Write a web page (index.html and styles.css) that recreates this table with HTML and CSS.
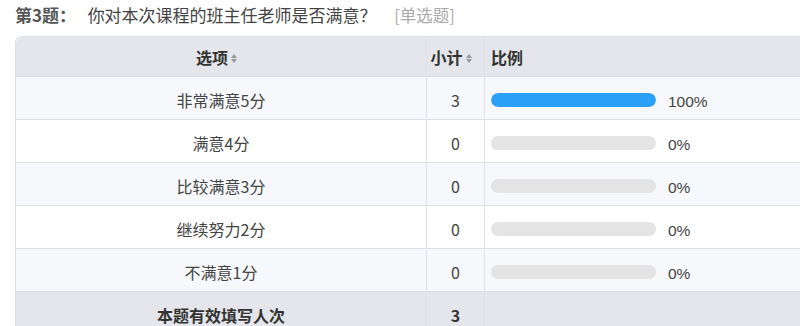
FILE: index.html
```html
<!DOCTYPE html>
<html lang="zh-CN">
<head>
<meta charset="utf-8">
<link rel="stylesheet" href="styles.css">
</head>
<body>
<div class="page">
  <div class="qtitle">
    <span class="qnum">第3题：</span>
    <span class="qtext">你对本次课程的班主任老师是否满意？</span>
    <span class="qtype">[单选题]</span>
  </div>
  <table class="stat">
    <colgroup>
      <col class="c-opt">
      <col class="c-cnt">
      <col class="c-pct">
    </colgroup>
    <thead>
      <tr>
        <th class="center">选项<span class="sort"><i class="up"></i><i class="down"></i></span></th>
        <th class="center">小计<span class="sort"><i class="up"></i><i class="down"></i></span></th>
        <th class="left">比例</th>
      </tr>
    </thead>
    <tbody>
      <tr class="odd">
        <td class="center">非常满意5分</td>
        <td class="center">3</td>
        <td><div class="pct"><div class="bar"><div class="fill" style="width:100%"></div></div><span class="pv">100%</span></div></td>
      </tr>
      <tr>
        <td class="center">满意4分</td>
        <td class="center">0</td>
        <td><div class="pct"><div class="bar"><div class="fill" style="width:0%"></div></div><span class="pv">0%</span></div></td>
      </tr>
      <tr class="odd">
        <td class="center">比较满意3分</td>
        <td class="center">0</td>
        <td><div class="pct"><div class="bar"><div class="fill" style="width:0%"></div></div><span class="pv">0%</span></div></td>
      </tr>
      <tr>
        <td class="center">继续努力2分</td>
        <td class="center">0</td>
        <td><div class="pct"><div class="bar"><div class="fill" style="width:0%"></div></div><span class="pv">0%</span></div></td>
      </tr>
      <tr class="odd">
        <td class="center">不满意1分</td>
        <td class="center">0</td>
        <td><div class="pct"><div class="bar"><div class="fill" style="width:0%"></div></div><span class="pv">0%</span></div></td>
      </tr>
    </tbody>
    <tfoot>
      <tr>
        <td class="center">本题有效填写人次</td>
        <td class="center">3</td>
        <td></td>
      </tr>
    </tfoot>
  </table>
</div>
</body>
</html>
```
FILE: styles.css
```css
html, body {
  margin: 0;
  padding: 0;
  background: #ffffff;
  overflow: hidden;
}
body {
  font-family: "Microsoft YaHei", "Noto Sans CJK SC", "Liberation Sans", sans-serif;
  color: #444;
}
.page {
  padding-left: 15px;
  width: 900px;
}
.qtitle {
  height: 30px;
  line-height: 30px;
  margin-bottom: 6px;
  white-space: nowrap;
}
.qnum {
  font-weight: bold;
  color: #555;
  font-size: 17px;
  margin-right: 8px;
}
.qtext {
  color: #444;
  font-size: 17px;
}
.qtype {
  color: #aaa;
  margin-left: 14px;
  font-size: 16.5px;
}
.stat {
  border-collapse: separate;
  border-spacing: 0;
  border-top: 1px solid #dde0e5;
  border-left: 1px solid #dde0e5;
  border-top-left-radius: 6px;
  width: 880px;
  table-layout: fixed;
  font-size: 16px;
}
.c-opt { width: 411px; }
.c-cnt { width: 58px; }
.stat th,
.stat td {
  border-right: 1px solid #dde0e5;
  border-bottom: 1px solid #dde0e5;
  color: #444;
}
.stat th {
  background: #e4e6eb;
  height: 39px;
  padding: 0 6px;
  font-weight: bold;
  color: #333;
  white-space: nowrap;
}
.stat th.center {
  padding: 0 12px 0 3px;
}
.stat thead th:first-child {
  border-top-left-radius: 6px;
}
.stat td {
  height: 38px;
  padding: 4px 6px 0;
  background: #ffffff;
}
.stat tr.odd td {
  background: #f6f8fb;
}
.stat tfoot td {
  background: #e4e6eb;
  font-weight: bold;
  color: #333;
}
.center { text-align: center; }
.left { text-align: left; }
.sort {
  display: inline-flex;
  flex-direction: column;
  gap: 1px;
  margin-left: 3px;
  vertical-align: middle;
  position: relative;
  top: -1px;
}
.sort i {
  display: block;
  width: 0;
  height: 0;
  border-left: 3px solid transparent;
  border-right: 3px solid transparent;
}
.sort .up { border-bottom: 4px solid #999; }
.sort .down { border-top: 4px solid #999; }
.pct {
  display: flex;
  align-items: center;
  gap: 12px;
}
.bar {
  width: 165px;
  height: 14px;
  border-radius: 7px;
  background: #e4e4e4;
  overflow: hidden;
}
.fill {
  height: 100%;
  background: #2aa1f6;
  border-radius: 7px;
}
.pv {
  font-family: "Liberation Sans", Arial, sans-serif;
  font-size: 15.5px;
  color: #444;
  position: relative;
  top: 2px;
}
```
